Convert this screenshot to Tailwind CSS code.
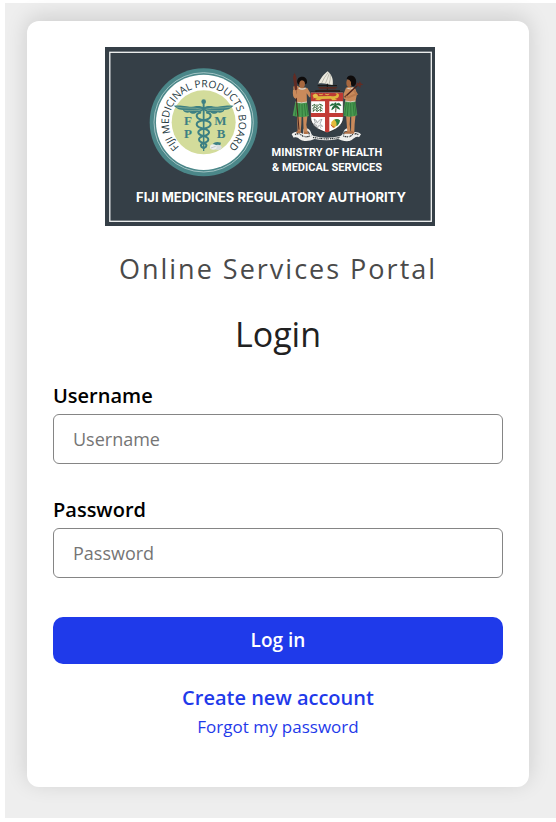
<!DOCTYPE html>
<html lang="en">
  <head>
    <meta charset="UTF-8" />
    <meta name="viewport" content="width=device-width, initial-scale=1.0" />
    <title>Online Services Portal - Login</title>
    <script src="https://cdn.jsdelivr.net/npm/@tailwindcss/browser@4"></script>
  </head>
  <body class="bg-white pl-[5px] pt-[3px] pb-1 font-['Open_Sans',sans-serif]">
    <main class="bg-[#eeeeee] pt-[18px] pl-[22px] pr-[27px] pb-[31px]">
      <div class="bg-white rounded-xl shadow-[0_-4px_22px_rgba(0,0,0,0.14)] px-[26px] pt-[26px] pb-[46px] flex flex-col">
        <!-- Logo -->
        <div class="flex justify-center pr-4">
          <svg
            class="w-full max-w-[330px]"
            viewBox="0 0 330 179"
            role="img"
            aria-label="Fiji Medicines Regulatory Authority"
          >
            <rect width="330" height="179" fill="#353f47" />
            <rect x="4.8" y="5.3" width="321.5" height="169" fill="none" stroke="#f4f5f5" stroke-width="1.3" />

            <!-- Medicinal Products Board seal -->
            <g transform="translate(40 18) scale(.3333)">
              <circle cx="176" cy="172" r="162" fill="#4b8789" />
              <circle cx="176" cy="172" r="149" fill="none" stroke="#cfe2e2" stroke-width="2" />
              <circle cx="176" cy="172" r="143" fill="#fff" />
              <circle cx="176" cy="172" r="96" fill="#d3dc9b" />
              <path id="seal-arc" d="M176 277A105 105 0 1 1 177 277" fill="none" />
              <text font-family="Open Sans, sans-serif" font-size="31" fill="#24383e" text-anchor="middle">
                <textPath href="#seal-arc" startOffset="50%">FIJI MEDICINAL PRODUCTS BOARD</textPath>
              </text>
              <g font-family="Liberation Serif, serif" font-weight="700" font-size="39" fill="#3d8083" text-anchor="middle">
                <text x="129" y="181">F</text>
                <text x="226" y="181">M</text>
                <text x="129" y="220">P</text>
                <text x="228" y="220">B</text>
              </g>
              <g fill="#3d8083">
                <circle cx="176" cy="110" r="7" />
                <path d="M173 115h6l-1 143h-4z" />
                <path d="M175 127C160 117 143 128 125 124C110 121 98 121 86 122C96 132 106 135 114 135C116 142 127 145 134 142C140 149 152 147 156 142C165 144 172 138 175 134z" />
                <path d="M177 127C192 117 209 128 227 124C242 121 254 121 266 122C256 132 246 135 238 135C236 142 225 145 218 142C212 149 200 147 196 142C187 144 180 138 177 134z" />
              </g>
              <path d="M94 126C120 132 148 126 170 133M258 126C232 132 204 126 182 133M118 136C138 139 154 134 166 137M234 136C214 139 198 134 186 137" stroke="#b7cda0" stroke-width="1.5" fill="none" />
              <g fill="none" stroke="#3d8083" stroke-width="6" stroke-linecap="round">
                <path d="M166 143C150 145 150 162 176 166C204 170 204 186 176 191C153 196 156 209 176 213C196 218 193 230 176 234C164 238 166 246 176 249" />
                <path d="M186 143C202 145 202 162 176 166C148 170 148 186 176 191C199 196 196 209 176 213C156 218 159 230 176 234C188 238 186 246 176 249" />
              </g>
              <path d="M203 237q8-10 25-4q-2 12-12 14z" fill="#3d8083" />
              <ellipse cx="219" cy="247" rx="11" ry="8" fill="#d9dede" />
              <ellipse cx="205" cy="246" rx="10" ry="8" fill="#eceeee" />
              <path d="M198 249l14-5" stroke="#aab5b5" stroke-width="2" />
            </g>

            <!-- Coat of arms -->
            <g transform="translate(160 18) scale(.3333)">
              <!-- canoe -->
              <path d="M160 56C166 40 178 26 188 19C200 28 206 44 203 60C188 58 174 53 160 56z" fill="#eceadf" />
              <path d="M170 54Q177 38 190 22M181 56Q188 40 193 25M192 58Q197 44 196 30" stroke="#8c8b80" stroke-width="1.5" fill="none" />
              <path d="M158 62h58M187 56v18" stroke="#171310" stroke-width="3" />
              <path d="M158 66h60l-6 5h-48zM160 74h54l-4 4h-46z" fill="#5a2a20" />
              <path d="M137 82h16v-4h70v4h12" stroke="#231a17" stroke-width="4" fill="none" />

              <!-- ribbon -->
              <path d="M80 208C86 198 104 198 113 207C118 196 111 188 124 190C141 193 135 210 146 213Q184 224 226 213C238 208 233 194 246 190C258 188 254 198 256 206C266 198 280 200 288 208L282 217C270 211 266 226 253 228C238 230 228 225 219 222Q185 230 149 222C138 226 126 230 115 227C102 226 100 212 86 218z" fill="#f0f0ee" />
              <path d="M90 209q12-7 23 4q9 5 26-1M280 209q-12-7-23 4q-9 5-24-1M144 217q42 9 81 0" stroke="#30363a" stroke-width="4" stroke-dasharray="3 2 5 2 2 3" fill="none" />
              <path d="M121 200q11-2 12 8M247 200q-10-2-11 8" stroke="#353f47" stroke-width="4" fill="none" />

              <!-- left warrior -->
              <path d="M85 65Q91 58 103 66L112 67L127 69L136 84L141 96L133 97L125 85L126 114H95L92 98L86 89z" fill="#c98a5b" />
              <path d="M96 147h14l-1 30l-2 25h-9zM114 147h14l-4 32l4 22l-12 1z" fill="#c98a5b" />
              <path d="M94 201l7-5l8 6l-4 3H94zM116 200h9l8 4l-6 3h-11z" fill="#b0724a" />
              <ellipse cx="111" cy="56" rx="9" ry="12" fill="#a8683f" />
              <path d="M97 53C92 30 129 28 126 53Q124 58 120 58Q121 48 111 46Q102 48 103 59Q98 58 97 53z" fill="#0e0b0b" />
              <path d="M101 69q10 7 21 0" stroke="#d8d5cf" stroke-width="4" fill="none" />
              <path d="M91 111q18 5 35 0l6 42q-23 7-49-1z" fill="#4a9a51" />
              <path d="M96 115l-5 37M103 116l-2 38M111 116l1 39M118 116l4 37M124 115l5 35" stroke="#256b34" stroke-width="2" />
              <path d="M92 111q18 5 34 0" stroke="#d6d2c4" stroke-width="3" fill="none" />
              <path d="M88 27L102 194" stroke="#4a211a" stroke-width="3" />
              <path d="M84 36l5-13l5 13l3 37l-7 5z" fill="#622c24" />
              <path d="M84 75q-3 23 8 26l6-5l-6-21" fill="#c98a5b" />

              <!-- right warrior -->
              <path d="M243 68Q261 61 271 71L276 87L271 111H242L241 103L231 98L228 88L237 84z" fill="#c98a5b" />
              <path d="M243 147h13l-2 31l3 25h-10zM259 147h13l-3 30l-1 24h-10z" fill="#c98a5b" />
              <path d="M237 203l10-5l9 4l-3 4h-16zM251 201l8-4l10 5l-3 4h-14z" fill="#b0724a" />
              <ellipse cx="252" cy="54" rx="8" ry="12" fill="#a8683f" />
              <path d="M245 41C249 26 269 29 273 44Q276 60 265 64Q257 64 258 51Q255 43 245 41z" fill="#0e0b0b" />
              <path d="M247 70q11 5 18-2" stroke="#d8d5cf" stroke-width="3" fill="none" />
              <path d="M240 109q16 5 31 0l6 42q-21 8-43 1z" fill="#4a9a51" />
              <path d="M244 113l-5 38M250 114l-3 39M257 114l1 39M264 113l4 39M269 112l4 37" stroke="#256b34" stroke-width="2" />
              <path d="M240 108q17 5 31 0" stroke="#d6d2c4" stroke-width="3" fill="none" />
              <path d="M239 97L285 54" stroke="#4a211a" stroke-width="4" />
              <path d="M276 52l6 4l2-8l4 7l7 4l-8 2l-1 8l-5-6l-8-1z" fill="#622c24" />
              <path d="M267 76l8 11l-25 10l-8-3" fill="none" stroke="#b97a4e" stroke-width="6" />

              <!-- shield -->
              <path d="M137 82H235V157C235 182 210 196 186 203C162 196 137 182 137 157z" fill="#fff" stroke="#221f20" stroke-width="2" />
              <path d="M138 83H234V109H138z" fill="#bd3934" />
              <path d="M180 108h13v92l-7 2l-6-2zM138 144h96v12h-96z" fill="#c23b35" />
              <path d="M143 101q8-12 19-7l34-1q15 3 18-2q4-6-6-4q11-6 14 2q1 10-12 12l7 4l-15 1l-4-5l-27 1l-8 4l-13-1l6-4l-8-2z" fill="#dfb53d" />
              <path d="M144 91q7-8 14-1l-3 6l-9 1zM162 88q7 3 12-1M180 87q7 5 13 0" fill="#e5bf4b" stroke="#e5bf4b" stroke-width="2" />
              <!-- sugar cane -->
              <path d="M145 141l4-24M156 141v-24M166 141l2-24" stroke="#4c5a3b" stroke-width="2" />
              <path d="M141 123l8-5l7 7l8-8l10 6M142 132l8-7l7 8l7-8l9 7M143 138l8-4l6 5l7-5l8 4" stroke="#3b7142" stroke-width="3" fill="none" />
              <!-- palm -->
              <path d="M212 142q2-12-1-21" stroke="#5c4a2c" stroke-width="3" fill="none" />
              <path d="M211 121q-10-11-16 2q9-5 16-2q-9 2-11 13q10-3 11-13q11-13 17 1q-9-4-17-1q12 4 13 12q-11-3-13-12q-5-9 0-7q5-4 0 7" fill="#1f6a38" stroke="#1f6a38" stroke-width="2" />
              <!-- dove -->
              <path d="M147 162q9 3 9 11q8-10 15-10l-6 13l8 8l-12-2l-4 9l-3-11l-10-2l7-4zM149 185l4-3M169 190l-4-3" fill="#f2f2f2" stroke="#62676a" stroke-width="1.5" />
              <!-- bananas -->
              <path d="M199 171q7-10 17-9l8 4q-3 15-11 18q-7 9-11 1q-5-4-3-14z" fill="#e3bb3b" />
              <path d="M208 164q9-5 17 2q-1 12-11 18q3-13-6-20z" fill="#2f8443" />
              <path d="M198 179q4 9 10 7" stroke="#c24d35" stroke-width="3" fill="none" />
            </g>

            <g font-family="Roboto, sans-serif" font-weight="700" font-size="11" fill="#fff" text-anchor="middle">
              <text x="222" y="109">MINISTRY OF HEALTH</text>
              <text x="222" y="124">&amp; MEDICAL SERVICES</text>
            </g>
            <text
              x="166"
              y="155"
              font-family="Inter, sans-serif"
              font-weight="700"
              font-size="13"
              fill="#fff"
              text-anchor="middle"
            >FIJI MEDICINES REGULATORY AUTHORITY</text>
          </svg>
        </div>

        <p class="mt-[23px] text-center text-[27px] leading-10 tracking-[2px] text-[#4a4a4a]">
          Online Services Portal
        </p>
        <h1 class="mt-[21px] text-center text-[34px] leading-12 text-[#212121]">Login</h1>

        <form class="mt-6 flex flex-col">
          <label for="username" class="text-[20px] leading-7 font-semibold text-black">Username</label>
          <input
            type="text"
            name="username"
            id="username"
            placeholder="Username"
            class="mt-1 h-[50px] w-full px-[19px] border border-[#858585] rounded-md text-[18px] placeholder:text-[#757575]"
          />
          <label for="password" class="mt-8 text-[20px] leading-7 font-semibold text-black">Password</label>
          <input
            type="password"
            name="password"
            id="password"
            placeholder="Password"
            class="mt-1 h-[50px] w-full px-[19px] border border-[#858585] rounded-md text-[18px] placeholder:text-[#757575]"
          />
          <button
            type="submit"
            class="mt-[39px] h-[47px] w-full rounded-[10px] bg-[#1f3aea] text-[19px] font-semibold text-white"
          >
            Log in
          </button>
        </form>

        <div class="mt-5 flex flex-col items-center gap-px text-[#1f3aea]">
          <a href="#" class="text-[20px] leading-7 font-semibold">Create new account</a>
          <a href="#" class="text-[17px] leading-7">Forgot my password</a>
        </div>
      </div>
    </main>
  </body>
</html>
